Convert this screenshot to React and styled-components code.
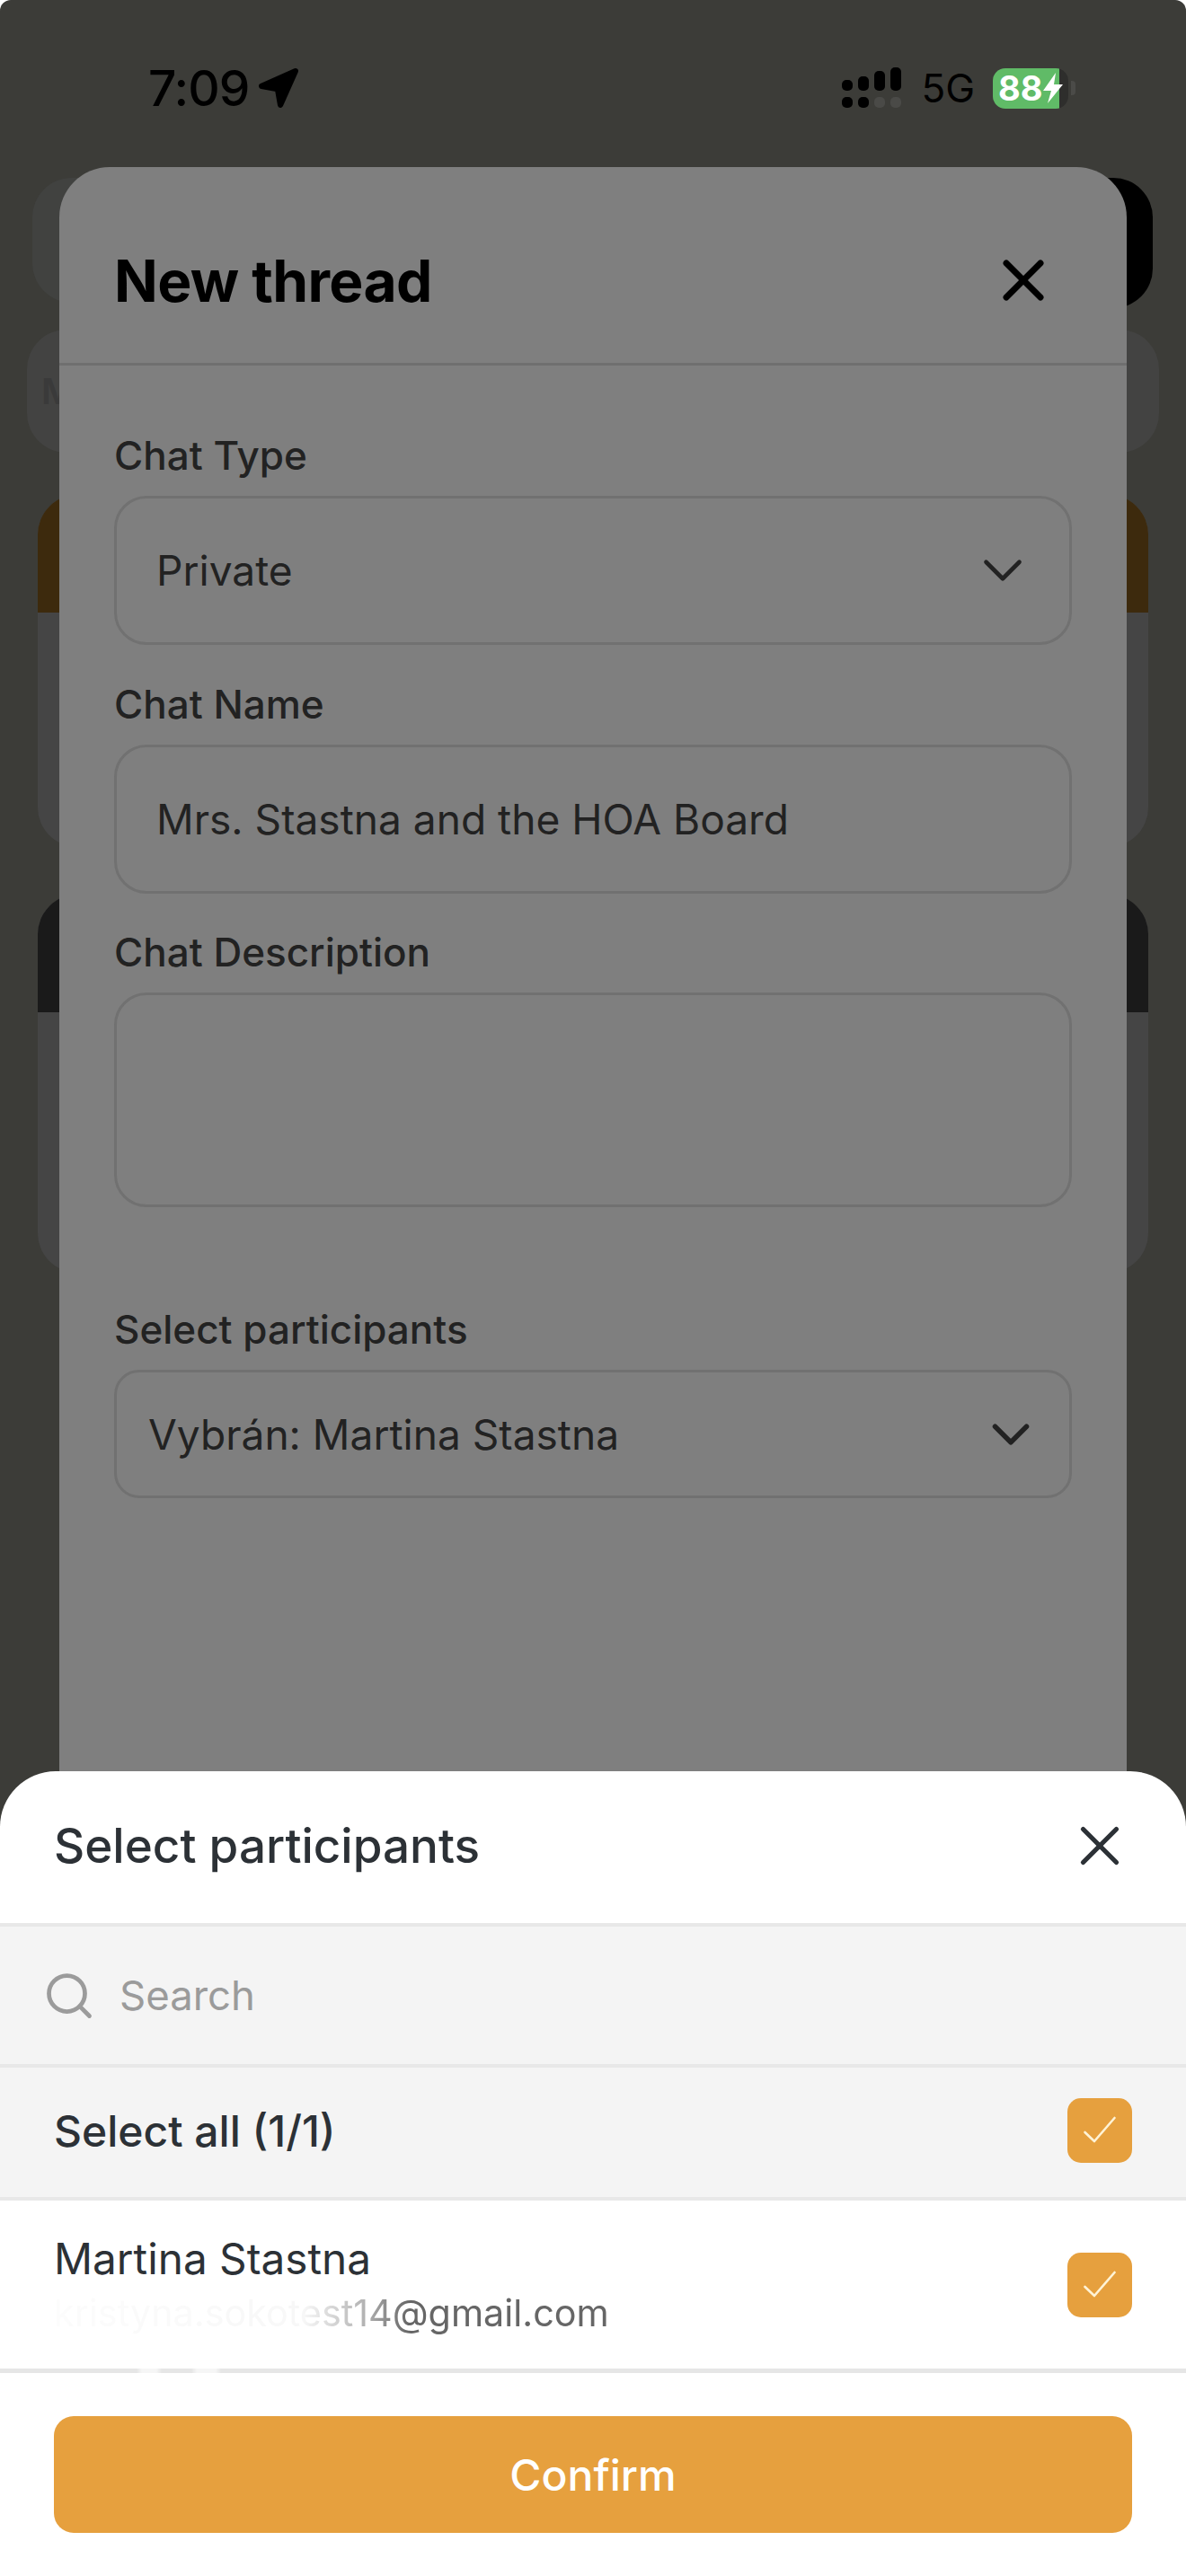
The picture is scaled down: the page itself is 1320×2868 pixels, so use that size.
import React from 'react';
import styled, { createGlobalStyle } from 'styled-components';
import { X, ChevronDown, ChevronLeft, ChevronRight, Search } from 'lucide-react';

const GlobalStyle = createGlobalStyle`
  html, body { margin: 0; padding: 0; background: #fff; }
  * { box-sizing: border-box; }
  body { font-family: Inter, "Liberation Sans", sans-serif; }
`;

const Screen = styled.div`
  position: relative;
  width: 1320px;
  height: 2868px;
  overflow: hidden;
  background: #3c3c38;
  border-radius: 12px 12px 0 0;
`;

/* page behind the dialogs */
const StatusBar = styled.div`
  display: flex;
  justify-content: space-between;
  align-items: center;
  height: 198px;
  padding: 0 123px 2px 165px;
  color: #000;
`;

const TimeGroup = styled.div`
  display: flex;
  align-items: center;
  gap: 10px;
  font-size: 55px;
  font-weight: 500;
  letter-spacing: -1px;
`;

const StatusGroup = styled.div`
  display: flex;
  align-items: center;
`;

const Network = styled.span`
  margin: 0 20px 0 22px;
  font-size: 44px;
  font-weight: 400;
`;

const Battery = styled.div`
  display: flex;
  align-items: center;
  width: 84px;
  height: 45px;
  padding-left: 6px;
  border-radius: 14px;
  background: linear-gradient(90deg, #60bb67 88%, #2e2e2c 88%);
  color: #fff;
  font-size: 38px;
  font-weight: 700;
`;

const BatteryNub = styled.div`
  width: 5px;
  height: 16px;
  margin-left: 3px;
  border-radius: 0 4px 4px 0;
  background: #4b4b48;
`;

const BackRows = styled.div`
  display: flex;
  flex-direction: column;
`;

const TopRow = styled.div`
  display: flex;
  height: 145px;
  padding: 0 37px 0 36px;
`;

const SearchStub = styled.div`
  flex: 1;
  height: 139px;
  border-radius: 44px;
  background: #414240;
`;

const BlackStub = styled.div`
  width: 120px;
  border-radius: 44px;
  background: #000;
`;

const FilterStub = styled.div`
  display: flex;
  justify-content: space-between;
  align-items: center;
  height: 137px;
  margin: 24px 30px 0;
  padding: 0 30px 0 16px;
  border-radius: 44px;
  background: #434342;
  color: #3a3a3a;
  font-size: 40px;
  font-weight: 600;
`;

const StubGroup = styled.div`
  display: flex;
  align-items: center;
  color: #2e2e2e;
`;

const StubLetter = styled.span`
  color: #3a3a3a;
`;

const BackCard = styled.div`
  height: ${(p) => p.$height}px;
  margin: ${(p) => p.$gap}px 42px 0;
  border-radius: 44px;
  overflow: hidden;
  background: #454545;
`;

const BackCardHead = styled.div`
  height: 131px;
  background: ${(p) => p.$color};
`;

/* New thread dialog */
const Dialog = styled.section`
  position: absolute;
  top: 186px;
  left: 66px;
  right: 66px;
  bottom: 0;
  display: flex;
  flex-direction: column;
  border-radius: 56px 56px 0 0;
  background: #7f7f7f;
`;

const DialogHeader = styled.header`
  display: flex;
  justify-content: space-between;
  align-items: center;
  height: 221px;
  padding: 34px 77px 0 61px;
  border-bottom: 3px solid #6f6f6f;
  color: #000;
`;

const DialogTitle = styled.h1`
  margin: 0;
  font-size: 64px;
  font-weight: 700;
  letter-spacing: -0.6px;
`;

const Form = styled.div`
  display: flex;
  flex-direction: column;
  padding: 72px 61px 0;
`;

const Label = styled.label`
  height: 56px;
  margin: ${(p) => p.$top || 0}px 0 17px;
  color: #222;
  font-size: 44px;
  font-weight: 500;
  line-height: 56px;
`;

const FieldBox = styled.div`
  display: flex;
  justify-content: space-between;
  align-items: center;
  height: ${(p) => p.$height}px;
  padding: 0 ${(p) => p.$right}px 0 ${(p) => p.$left}px;
  border: 3px solid #717171;
  border-radius: ${(p) => p.$radius}px;
  color: #222;
  font-size: 46.1px;
`;

/* Select participants sheet */
const Sheet = styled.section`
  position: absolute;
  left: 0;
  right: 0;
  bottom: 0;
  height: 896px;
  display: flex;
  flex-direction: column;
  border-radius: 62px 62px 0 0;
  background: #fff;
  color: #2c3136;
`;

const SheetHeader = styled.header`
  display: flex;
  justify-content: space-between;
  align-items: center;
  height: 173px;
  padding: 0 59px 3px 60px;
  border-bottom: 4px solid #e8e8e8;
`;

const SheetTitle = styled.h2`
  margin: 0;
  font-size: 53px;
  font-weight: 500;
`;

const SearchRow = styled.div`
  display: flex;
  align-items: center;
  gap: 26px;
  height: 157px;
  padding: 0 0 0 47px;
  border-bottom: 4px solid #e8e8e8;
  background: #f4f4f4;
  color: #9b9b9b;
  font-size: 45.5px;
`;

const OptionRow = styled.div`
  display: flex;
  justify-content: space-between;
  align-items: center;
  height: 148px;
  padding: 0 60px 4px;
  border-bottom: 4px solid #e8e8e8;
  background: #f4f4f4;
`;

const PersonRow = styled.div`
  display: flex;
  justify-content: space-between;
  align-items: center;
  height: 187px;
  padding: 0 60px;
  background: #fff;
`;

const OptionText = styled.span`
  font-size: 48px;
  font-weight: 500;
`;

const Person = styled.div`
  display: flex;
  flex-direction: column;
  gap: 6px;
`;

const PersonName = styled.span`
  font-size: 47.7px;
  font-weight: 400;
  line-height: 56px;
`;

const PersonEmail = styled.span`
  color: #666;
  font-size: 41.3px;
  line-height: 52px;
  -webkit-mask-image: linear-gradient(90deg, rgba(0, 0, 0, 0.02) 0, rgba(0, 0, 0, 0.05) 45%, rgba(0, 0, 0, 0.5) 56%, #000 64%);
  mask-image: linear-gradient(90deg, rgba(0, 0, 0, 0.02) 0, rgba(0, 0, 0, 0.05) 45%, rgba(0, 0, 0, 0.5) 56%, #000 64%);
`;

const CheckBox = styled.div`
  display: flex;
  justify-content: center;
  align-items: center;
  width: 72px;
  height: 72px;
  border-radius: 15px;
  background: #e6a03e;
`;

const FooterRule = styled.div`
  height: 5px;
  background: linear-gradient(
    90deg,
    #e6e6e6 152px,
    #f6f6f6 158px,
    #f6f6f6 174px,
    #e6e6e6 180px,
    #e6e6e6 213px,
    #f6f6f6 219px,
    #f6f6f6 240px,
    #e6e6e6 246px
  );
`;

const Footer = styled.div`
  flex: 1;
  padding: 48px 60px 0;
`;

const ConfirmButton = styled.button`
  display: block;
  width: 100%;
  height: 130px;
  border: 0;
  border-radius: 22px;
  background: #e6a03e;
  color: #fff;
  font-family: inherit;
  font-size: 48px;
  font-weight: 500;
`;

function LocationArrow() {
  return (
    <svg width="46" height="46" viewBox="0 0 44 44">
      <path d="M40 4 L4 20 L21 23 L24 40 Z" fill="#000" stroke="#000" strokeWidth="6" strokeLinejoin="round" />
    </svg>
  );
}

function SignalBars() {
  const tops = [88, 84, 78, 74];
  return (
    <svg width="66" height="46" viewBox="0 0 66 46">
      {tops.map((top, i) => (
        <g key={top}>
          <rect x={i * 18} y={top - 74} width="12" height={100 - top} rx="5" fill="#000" />
          <rect x={i * 18} y="33" width="12" height="12" rx="5" fill={i < 2 ? '#000' : '#4a4a47'} />
        </g>
      ))}
    </svg>
  );
}

function Bolt() {
  return (
    <svg width="24" height="34" viewBox="0 0 24 34">
      <path d="M15 0 L1 20 L10 20 L6 34 L23 13 L13 13 Z" fill="#fff" />
    </svg>
  );
}

function TickBox() {
  return (
    <CheckBox>
      <svg width="40" height="40" viewBox="0 0 40 40">
        <path d="M3.5 22 L14 32 L36.5 6" fill="none" stroke="#fff3d6" strokeWidth="2.6" strokeLinecap="round" strokeLinejoin="round" />
      </svg>
    </CheckBox>
  );
}

export default function App() {
  return (
    <Screen>
      <GlobalStyle />
      <StatusBar>
        <TimeGroup>
          7:09
          <LocationArrow />
        </TimeGroup>
        <StatusGroup>
          <SignalBars />
          <Network>5G</Network>
          <Battery>
            88
            <Bolt />
          </Battery>
          <BatteryNub />
        </StatusGroup>
      </StatusBar>
      <BackRows>
        <TopRow>
          <SearchStub />
          <BlackStub />
        </TopRow>
        <FilterStub>
          <StubGroup>
            <StubLetter>M</StubLetter>
            <ChevronLeft size={30} strokeWidth={4} />
          </StubGroup>
          <StubGroup>
            <ChevronRight size={30} strokeWidth={4} />
          </StubGroup>
        </FilterStub>
        <BackCard $height={392} $gap={47}>
          <BackCardHead $color="#3d2a0d" />
        </BackCard>
        <BackCard $height={421} $gap={53}>
          <BackCardHead $color="#1a1a1a" />
        </BackCard>
      </BackRows>

      <Dialog>
        <DialogHeader>
          <DialogTitle>New thread</DialogTitle>
          <X size={76} strokeWidth={2.2} />
        </DialogHeader>
        <Form>
          <Label>Chat Type</Label>
          <FieldBox $height={166} $radius={36} $left={44} $right={37}>
            Private
            <ChevronDown size={74} strokeWidth={1.5} />
          </FieldBox>
          <Label $top={38}>Chat Name</Label>
          <FieldBox $height={166} $radius={36} $left={44} $right={37}>
            Mrs. Stastna and the HOA Board
          </FieldBox>
          <Label $top={37}>Chat Description</Label>
          <FieldBox $height={239} $radius={36} $left={44} $right={37} />
          <Label $top={108}>Select participants</Label>
          <FieldBox $height={143} $radius={28} $left={35} $right={30}>
            Vybrán: Martina Stastna
            <ChevronDown size={70} strokeWidth={1.9} />
          </FieldBox>
        </Form>
      </Dialog>

      <Sheet>
        <SheetHeader>
          <SheetTitle>Select participants</SheetTitle>
          <X size={74} strokeWidth={1.7} />
        </SheetHeader>
        <SearchRow>
          <Search size={60} strokeWidth={1.9} />
          Search
        </SearchRow>
        <OptionRow>
          <OptionText>Select all (1/1)</OptionText>
          <TickBox />
        </OptionRow>
        <PersonRow>
          <Person>
            <PersonName>Martina Stastna</PersonName>
            <PersonEmail>kristyna.sokotest14@gmail.com</PersonEmail>
          </Person>
          <TickBox />
        </PersonRow>
        <FooterRule />
        <Footer>
          <ConfirmButton>Confirm</ConfirmButton>
        </Footer>
      </Sheet>
    </Screen>
  );
}
